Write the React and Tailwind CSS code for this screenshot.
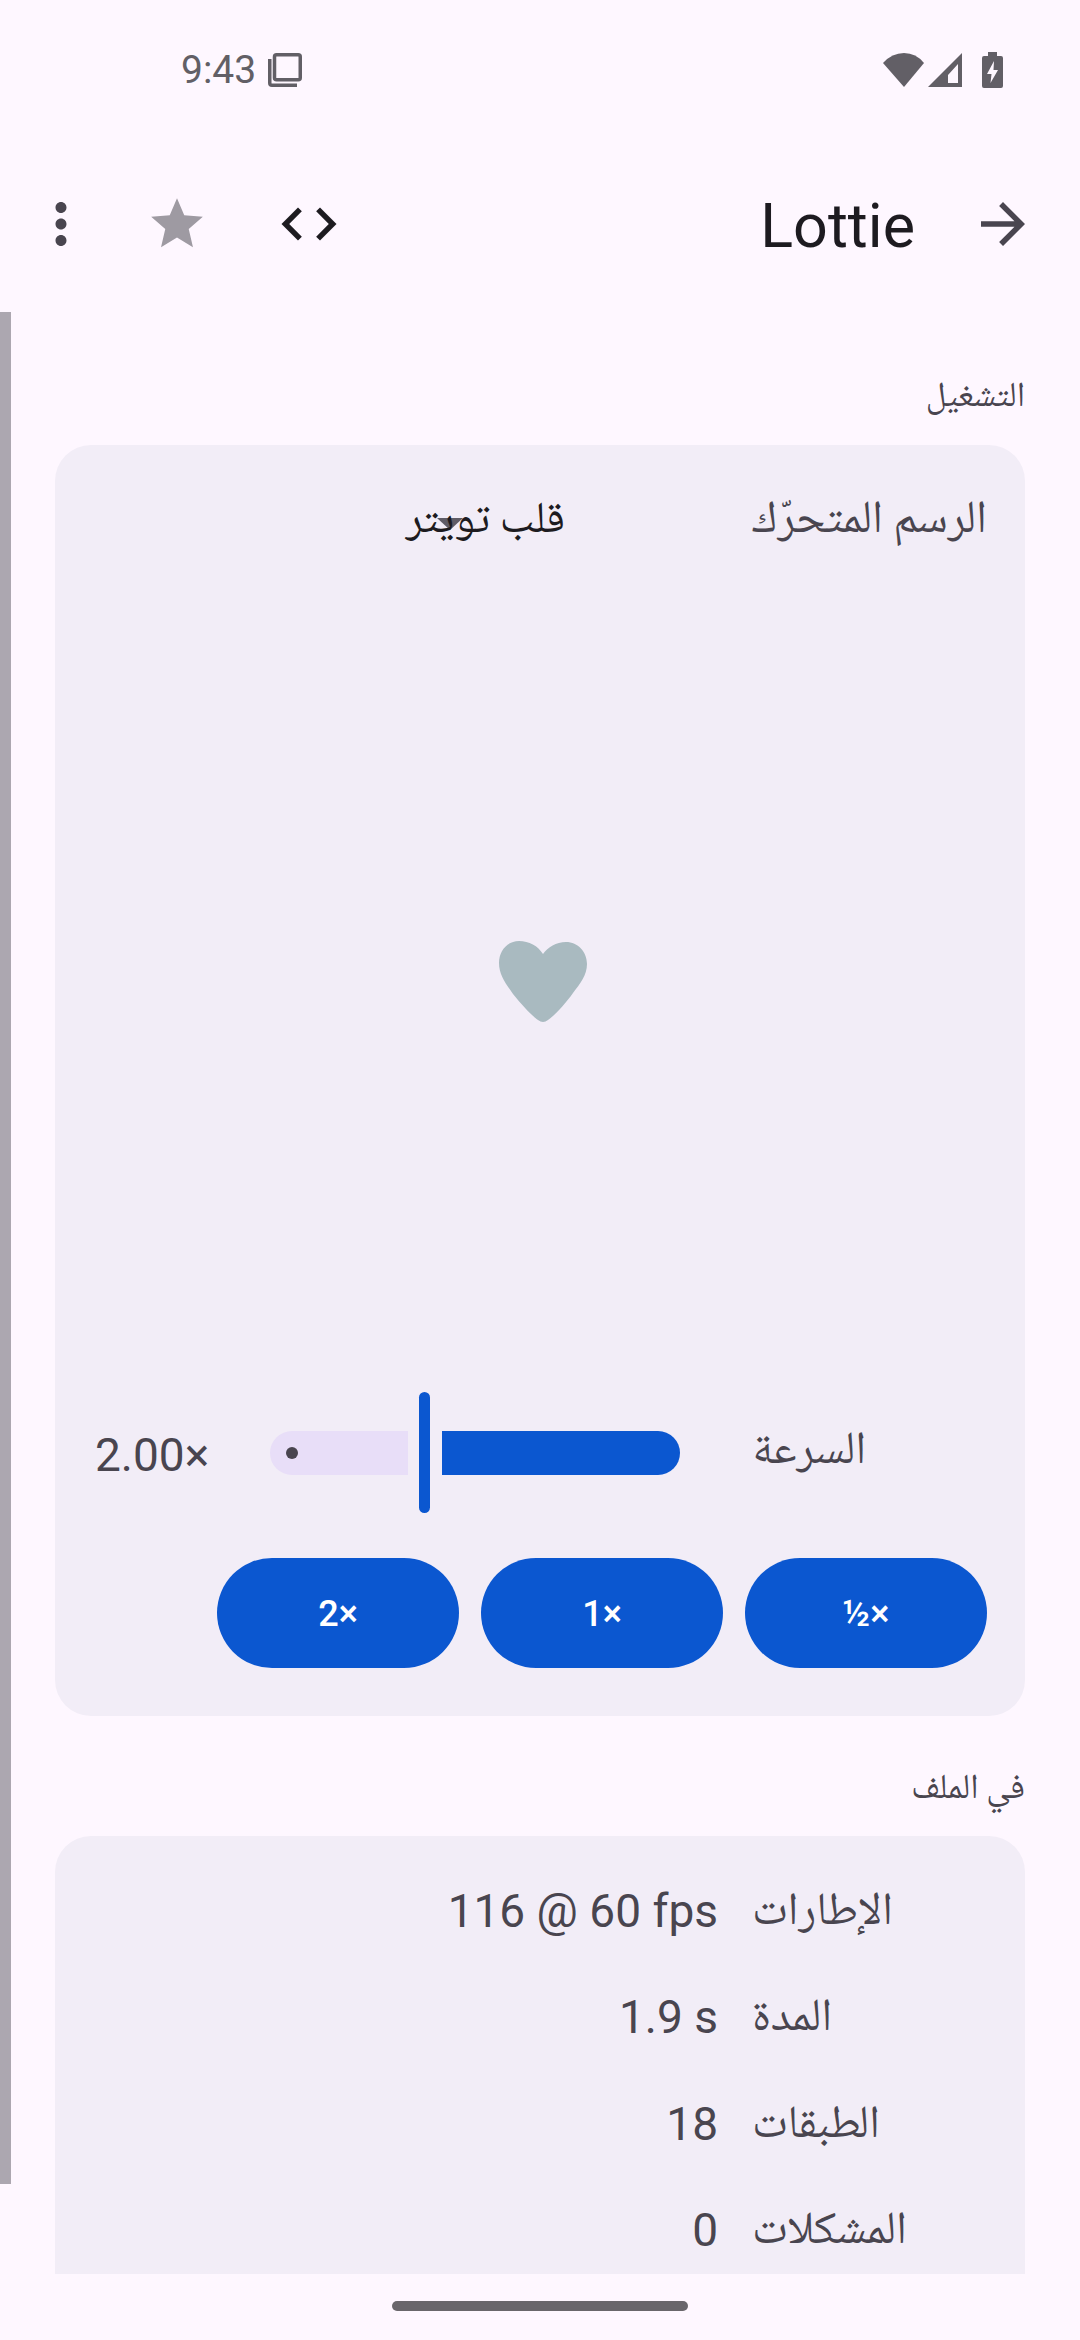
function Row({ label, value }) {
  return (
    <div className="flex items-center h-[106.5px]">
      <div className="w-[235px] pt-[6px] text-left text-[46px] text-[#49454f] font-['Noto_Naskh_Arabic',serif]">{label}</div>
      <div className="mr-[34px] text-[46px] text-[#49454f] font-['Roboto',sans-serif]" dir="ltr">{value}</div>
    </div>
  );
}

function Speed({ children }) {
  return (
    <div className="w-[242px] h-[110px] pt-[2px] rounded-full bg-[#0b57d0] text-white text-[36px] font-medium font-['Roboto',sans-serif] flex items-center justify-center" dir="ltr">
      {children}
    </div>
  );
}

export default function App() {
  return (
    <div className="relative w-[1080px] h-[2340px] bg-[#fef7ff] flex flex-col overflow-hidden" dir="rtl">
      {/* status bar */}
      <div className="h-[140px] flex items-center justify-between pl-[181px] pr-[77px] shrink-0" dir="ltr">
        <div className="flex items-center">
          <span className="w-[87px] text-[39px] text-[#625f66] font-['Roboto',sans-serif]">9:43</span>
          <svg width="34" height="34" viewBox="0 0 34 34" fill="none" stroke="#625f66" strokeWidth="3.5">
            <rect x="6.5" y="1.75" width="25.75" height="25" rx="2" />
            <path d="M1.75 6 V30 Q1.75 32.25 4 32.25 H29" />
          </svg>
        </div>
        <div className="flex items-center">
          <svg width="42" height="34" viewBox="0 0 42 34"><path d="M21 34 L0 10 Q9 0 21 0 Q33 0 41 10 Z" fill="#625f66" /></svg>
          <svg className="ml-[3px]" width="34" height="34" viewBox="0 0 34 34"><path d="M34 0 V34 H0 Z M30 11 L20 22 V30 H30 Z" fill="#625f66" fillRule="evenodd" /></svg>
          <svg className="ml-[20px]" width="21" height="36" viewBox="0 0 21 36"><path d="M6 0 H15 V4 H19 Q21 4 21 6 V34 Q21 36 19 36 H2 Q0 36 0 34 V6 Q0 4 2 4 H6 Z" fill="#625f66" /><path d="M12 9 L5 22 H9.5 L8.5 31 L16 18 H11.5 Z" fill="#fef7ff" /></svg>
        </div>
      </div>

      {/* toolbar */}
      <div className="h-[168px] shrink-0 flex items-center pr-[44px] pl-[28px]">
        <svg width="66" height="66" viewBox="0 0 24 24" fill="#49454f"><path d="M12 4l-1.41 1.41L16.17 11H4v2h12.17l-5.58 5.59L12 20l8-8z" /></svg>
        <div className="mr-[55px] pt-[5px] text-[61px] text-[#1d1b20] leading-none font-['Roboto',sans-serif]" dir="ltr">Lottie</div>
        <div className="flex-1" />
        <svg width="66" height="66" viewBox="0 0 24 24" fill="#1d1b20"><path d="M9.4 16.6L4.8 12l4.6-4.6L8 6l-6 6 6 6 1.4-1.4zm5.2 0l4.6-4.6-4.6-4.6L16 6l6 6-6 6-1.4-1.4z" /></svg>
        <svg className="mr-[68px]" width="62" height="62" viewBox="0 0 24 24" fill="#9e9aa2"><path d="M12 17.27L18.18 21l-1.64-7.03L22 9.24l-7.19-.61L12 2 9.19 8.63 2 9.24l5.46 4.73L5.82 21z" /></svg>
        <svg className="mr-[52px]" width="66" height="66" viewBox="0 0 24 24" fill="#49454f"><path d="M12 8c1.1 0 2-.9 2-2s-.9-2-2-2-2 .9-2 2 .9 2 2 2zm0 2c-1.1 0-2 .9-2 2s.9 2 2 2 2-.9 2-2-.9-2-2-2zm0 6c-1.1 0-2 .9-2 2s.9 2 2 2 2-.9 2-2-.9-2-2-2z" /></svg>
      </div>

      {/* content */}
      <div className="flex-1 min-h-0 overflow-hidden px-[55px]">
        <div className="h-[137px] flex items-center pt-[46px] text-[35px] text-[#49454f] font-['Noto_Naskh_Arabic',serif]">التشغيل</div>

        <div className="rounded-[36px] bg-[#f2edf7] pt-[48px] pb-[48px] pl-[40px] pr-[38px]">
          <div className="relative flex items-center h-[54px]">
            <div className="w-[233px] pt-[5px] whitespace-nowrap text-left text-[46px] text-[#49454f] font-['Noto_Naskh_Arabic',serif]">الرسم المتحرّك</div>
            <svg className="absolute left-[342px] top-[25px]" width="26" height="12" viewBox="0 0 26 12"><path d="M0 0 H26 L13 12 Z" fill="#5f5c66" /></svg>
            <div className="relative mr-[189px] pt-[5px] whitespace-nowrap text-[44px] text-[#1d1b20] font-['Noto_Naskh_Arabic',serif]">قلب تويتر</div>
          </div>

          <div className="h-[845px] flex items-center justify-center pt-[25px] pl-[4px]">
            <svg width="88" height="82" viewBox="0 0 88 82">
              <path d="M44 13 C39 5 30 0 20 0 C8 0 0 10 0 22 C0 34 7 43 14 53 C22 63 33 75 39 79 Q44 83 49 79 C56 74 67 62 74 52 C81 43 88 34 88 23 C88 11 79 1 67 1 C57 1 49 6 44 13 Z" fill="#a9bac0" />
            </svg>
          </div>

          <div className="flex items-center h-[121px]">
            <div className="w-[235px] pt-[2px] text-left text-[46px] text-[#49454f] font-['Noto_Naskh_Arabic',serif]">السرعة</div>
            <div className="mr-[72px] w-[239px] h-[44px] rounded-r-full rounded-l-[6px] bg-[#0b57d0]" />
            <div className="mr-[12px] w-[11px] h-[121px] rounded-full bg-[#0b57d0]" />
            <div className="relative mr-[11px] w-[138px] h-[44px] rounded-l-full rounded-r-[6px] bg-[#e8def8]">
              <div className="absolute left-[16px] top-[16px] w-[12px] h-[12px] rounded-full bg-[#49454f]" />
            </div>
            <div className="mr-[61px] pt-[6px] text-[46px] text-[#49454f] font-['Roboto',sans-serif]" dir="ltr">2.00×</div>
          </div>

          <div className="mt-[45px] flex gap-[22px]">
            <Speed>½×</Speed>
            <Speed>1×</Speed>
            <Speed>2×</Speed>
          </div>
        </div>

        <div className="h-[120px] flex items-center pt-[50px] pb-[20px] text-[35px] text-[#49454f] font-['Noto_Naskh_Arabic',serif]">في الملف</div>

        <div className="rounded-t-[36px] bg-[#f2edf7] pt-[22px] pl-[40px] pr-[38px] h-[600px]">
          <Row label="الإطارات" value="116 @ 60 fps" />
          <Row label="المدة" value="1.9 s" />
          <Row label="الطبقات" value="18" />
          <Row label="المشكلات" value="0" />
        </div>
      </div>

      {/* gesture nav */}
      <div className="h-[66px] shrink-0 bg-[#fef7ff] flex justify-center pt-[27px]">
        <div className="w-[296px] h-[10px] rounded-full bg-[#69666b]" />
      </div>

      {/* scrollbar */}
      <div className="absolute left-0 top-[312px] w-[11px] h-[1872px] bg-[#aca7b0]" />
    </div>
  );
}
